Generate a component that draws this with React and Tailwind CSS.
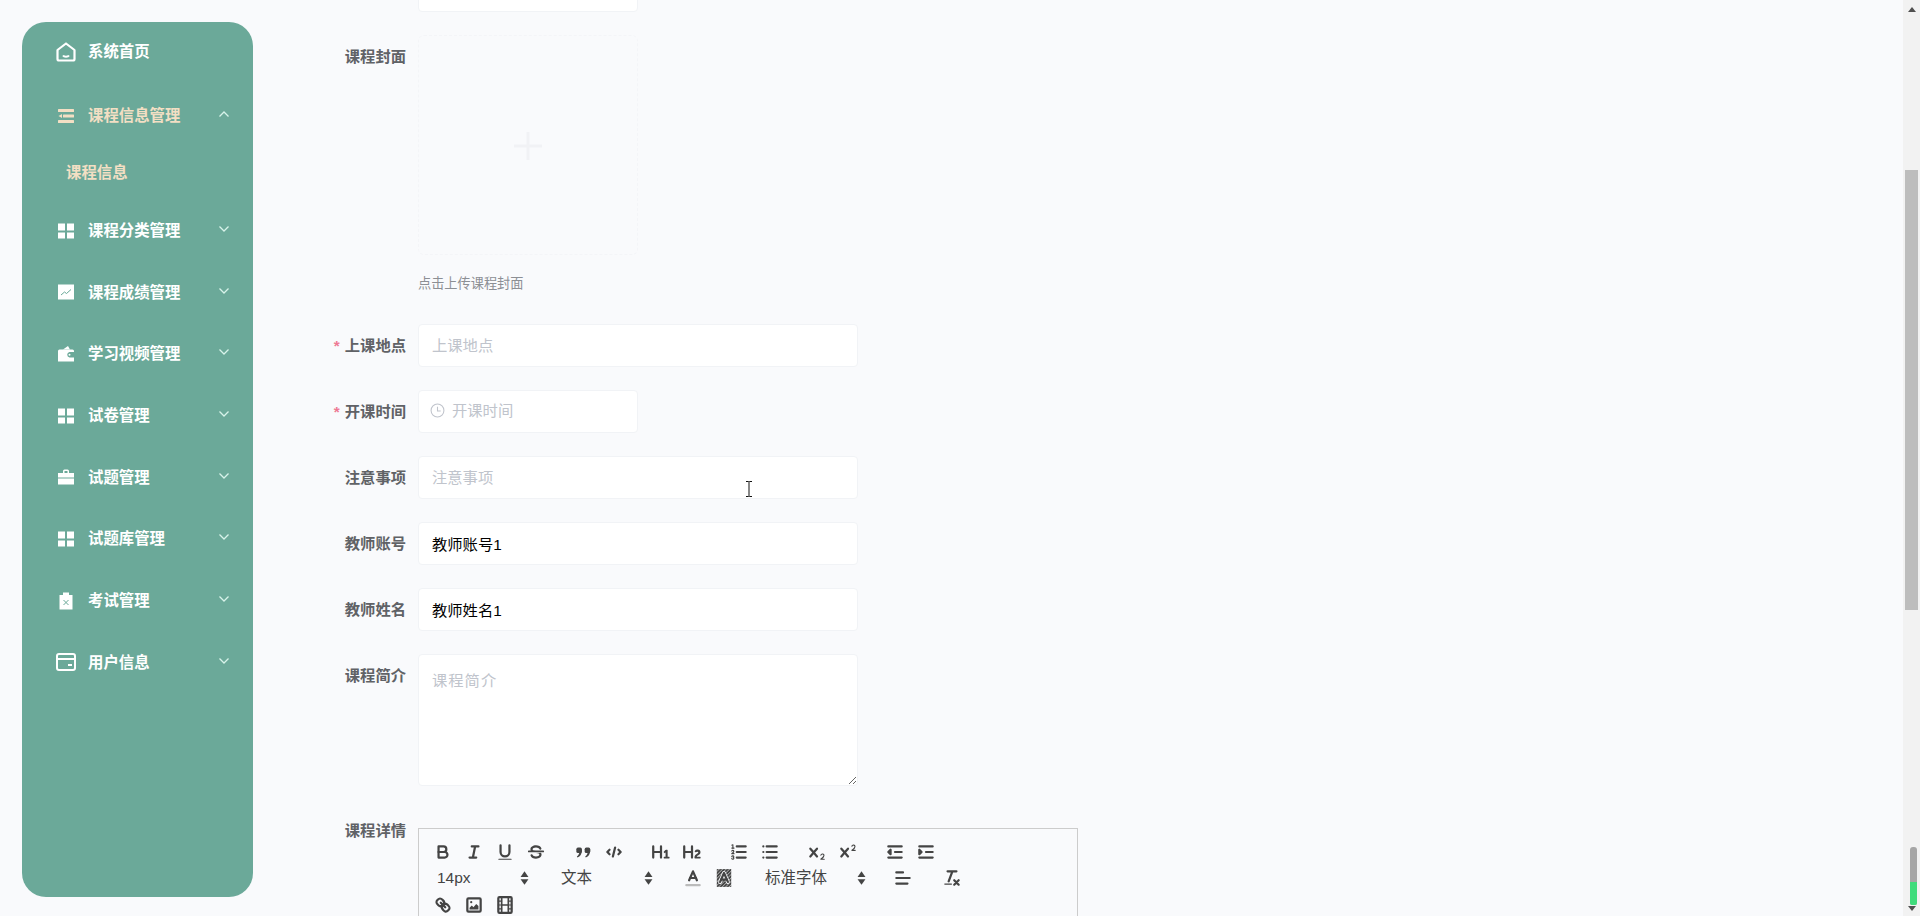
import React from "react";

const S = ({ children }) => (
  <svg viewBox="0 0 18 18" className="w-5 h-5" fill="none" stroke="#444" strokeWidth="2" strokeLinecap="round" strokeLinejoin="round">
    {children}
  </svg>
);
const F = (props) => <path fill="#444" stroke="none" {...props} />;

const xMark =
  "M9.65,5.241a1,1,0,0,0-1.409.108L6,7.964,3.759,5.349A1,1,0,0,0,2.192,6.59178Q2.21541,6.6213,2.241,6.649L4.684,9.5,2.241,12.35A1,1,0,0,0,3.71,13.70722q0.02557-.02768.049-0.05722L6,11.036,8.241,13.65a1,1,0,1,0,1.567-1.24277Q9.78459,12.3777,9.759,12.35L7.316,9.5,9.759,6.651A1,1,0,0,0,9.65,5.241Z";

// toolbar icons
const tools = {
  bold: <S><path d="M5,4H9.5A2.5,2.5,0,0,1,12,6.5v0A2.5,2.5,0,0,1,9.5,9H5V4Z" /><path d="M5,9h5.5A2.5,2.5,0,0,1,13,11.5v0A2.5,2.5,0,0,1,10.5,14H5V9Z" /></S>,
  italic: <S><path d="M7 4H13M5 14H11M8 14L10 4" /></S>,
  underline: <S><path d="M5,3V9a4.012,4.012,0,0,0,4,4H9a4.012,4.012,0,0,0,4-4V3" /><rect x="3" y="15" width="12" height="1" rx="0.5" fill="#444" stroke="none" /></S>,
  strike: <S><path d="M15.5 8.5H2.5" strokeWidth="1.5" /><F d="M9.007,8C6.542,7.791,6,7.519,6,6.5,6,5.792,7.283,5,9,5c1.571,0,2.765.679,2.969,1.309a1,1,0,0,0,1.9-.617C13.356,4.106,11.354,3,9,3,6.2,3,4,4.538,4,6.5a3.2,3.2,0,0,0,.5,1.843Z" /><F d="M8.984,10C11.457,10.208,12,10.479,12,11.5c0,.708-1.283,1.5-3,1.5-1.571,0-2.765-.679-2.969-1.309a1,1,0,1,0-1.9.617C4.644,13.894,6.646,15,9,15c2.8,0,5-1.538,5-3.5a3.2,3.2,0,0,0-.5-1.843Z" /></S>,
  quote: <S><rect x="3" y="5" width="5" height="5" rx="1.5" fill="#444" stroke="none" /><rect x="10.5" y="5" width="5" height="5" rx="1.5" fill="#444" stroke="none" /><F d="M6 7H8C8 11 6.5 13 4 14L3.5 13C5 12 6 10.5 6 7Z" /><F d="M13.5 7H15.5C15.5 11 14 13 11.5 14L11 13C12.5 12 13.5 10.5 13.5 7Z" /></S>,
  code: <S><polyline points="5 7 3 9 5 11" /><polyline points="13 7 15 9 13 11" /><path d="M10 5L8 13" /></S>,
  h1: <S><F d="M10,4V14a1,1,0,0,1-2,0V10H3v4a1,1,0,0,1-2,0V4A1,1,0,0,1,3,4V8H8V4a1,1,0,0,1,2,0Zm6.06787,9.209H14.98975V7.59863a.54085.54085,0,0,0-.605-.60547h-.62744a1.01119,1.01119,0,0,0-.748.29688L11.645,8.56641a.5435.5435,0,0,0-.022.8584l.28613.30762a.53861.53861,0,0,0,.84717.0332l.09912-.08789a1.2137,1.2137,0,0,0,.2417-.35254h.02246s-.01123.30859-.01123.60547V13.209H12.041a.54085.54085,0,0,0-.605.60547v.43945a.54085.54085,0,0,0,.605.60547h4.02686a.54085.54085,0,0,0,.605-.60547v-.43945A.54085.54085,0,0,0,16.06787,13.209Z" /></S>,
  h2: <S><F d="M16.73975,13.81445v.43945a.54085.54085,0,0,1-.605.60547H11.855a.58392.58392,0,0,1-.64893-.60547V14.0127c0-2.90527,3.39941-3.42187,3.39941-4.55469a.77675.77675,0,0,0-.84717-.78125,1.17684,1.17684,0,0,0-.83594.38477c-.2749.26367-.561.374-.85791.13184l-.4292-.34082c-.30811-.24219-.38525-.51758-.1543-.81445a2.97155,2.97155,0,0,1,2.45361-1.17676,2.45393,2.45393,0,0,1,2.68408,2.40918c0,2.45312-3.1792,2.92676-3.27832,3.93848h2.79443A.54085.54085,0,0,1,16.73975,13.81445ZM9,3A.99974.99974,0,0,0,8,4V8H3V4A1,1,0,0,0,1,4V14a1,1,0,0,0,2,0V10H8v4a1,1,0,0,0,2,0V4A.99974.99974,0,0,0,9,3Z" /></S>,
  ol: <S><path d="M7 4H15M7 9H15M7 14H15" /><path d="M2.5 5.5H4.5" strokeWidth="1" /><F d="M3.5,6A0.5,0.5,0,0,1,3,5.5V3.085l-0.276.138A0.5,0.5,0,0,1,2.053,3c-0.124-.247-0.023-0.324.224-0.447l1-.5A0.5,0.5,0,0,1,4,2.5v3A0.5,0.5,0,0,1,3.5,6Z" /><path d="M4.5,10.5h-2c0-.234,1.85-1.076,1.85-2.234A0.959,0.959,0,0,0,2.5,8.156" strokeWidth="1" /><path d="M2.5,14.846a0.959,0.959,0,0,0,1.85-.109A0.7,0.7,0,0,0,3.75,14a0.688,0.688,0,0,0,.6-0.736,0.959,0.959,0,0,0-1.85-.109" strokeWidth="1" /></S>,
  ul: <S><path d="M6 4H15M6 9H15M6 14H15M3 4H3M3 9H3M3 14H3" /></S>,
  sub: <S><F d="M15.5,15H13.861a3.858,3.858,0,0,0,1.914-2.975,1.8,1.8,0,0,0-1.6-1.751A1.921,1.921,0,0,0,12.021,11.7a0.50013,0.50013,0,1,0,.957.291h0a0.914,0.914,0,0,1,1.053-.725,0.81,0.81,0,0,1,.744.762c0,1.076-1.16971,1.86982-1.93971,2.43082A1.45639,1.45639,0,0,0,12,15.5a0.5,0.5,0,0,0,.5.5h3A0.5,0.5,0,0,0,15.5,15Z" /><F d={xMark} /></S>,
  sup: <S><F d="M15.5,7H13.861a4.015,4.015,0,0,0,1.914-2.975,1.8,1.8,0,0,0-1.6-1.751A1.922,1.922,0,0,0,12.021,3.7a0.5,0.5,0,1,0,.957.291,0.917,0.917,0,0,1,1.053-.725,0.81,0.81,0,0,1,.744.762c0,1.077-1.164,1.925-1.934,2.486A1.423,1.423,0,0,0,12,7.5a0.5,0.5,0,0,0,.5.5h3A0.5,0.5,0,0,0,15.5,7Z" /><F d={xMark} /></S>,
  outdent: <S><path d="M3 14H15M3 4H15M9 9H15" /><polygon points="5 7 5 11 3 9 5 7" fill="#444" /></S>,
  indent: <S><path d="M3 14H15M3 4H15M9 9H15" /><polygon points="3 7 3 11 5 9 3 7" fill="#444" /></S>,
  color: <S><path d="M3 15.5H15" stroke="#bbb" /><polyline points="5.5 11 9 3 12.5 11" /><path d="M11.63 9H6.38" /></S>,
  background: (
    <S>
      <defs>
        <pattern id="hatch" width="2.2" height="2.2" patternUnits="userSpaceOnUse" patternTransform="rotate(45)">
          <rect width="0.8" height="2.2" fill="#555" />
        </pattern>
      </defs>
      <rect x="2.5" y="1" width="13" height="16" fill="url(#hatch)" stroke="none" />
      <polyline points="5.5 12.5 9 4.5 12.5 12.5" stroke="#f9fafc" strokeWidth="3.5" />
      <polyline points="5.5 12.5 9 4.5 12.5 12.5" />
      <path d="M11.63 10.5H6.38" />
    </S>
  ),
  align: <S><path d="M3 9H15M3 14H13M3 4H9" /></S>,
  clean: <S><path d="M5 3H13M6 12L9.35 3" /><path d="M11 11L15 15M15 11L11 15" /><rect x="2" y="14" width="7" height="1" rx="0.5" fill="#444" stroke="none" /></S>,
  link: <S><path d="M7 7L11 11" /><path d="M8.9,4.577a3.476,3.476,0,0,1,.36,4.679A3.476,3.476,0,0,1,4.577,8.9C3.185,7.5,2.035,6.4,4.217,4.217S7.5,3.185,8.9,4.577Z" /><path d="M13.423,9.1a3.476,3.476,0,0,0-4.679-.36,3.476,3.476,0,0,0,.36,4.679c1.392,1.392,2.5,2.542,4.679.36S14.815,10.5,13.423,9.1Z" /></S>,
  image: <S><rect x="3" y="3" width="12" height="12" rx="1" /><circle cx="6.5" cy="6.5" r="1" fill="#444" stroke="none" /><polygon points="5 13 5 11.5 7 9.5 8.5 11 11 8 13 10 13 13" fill="#444" stroke="none" /></S>,
  video: <S><rect x="3" y="2" width="12" height="14" rx="1" /><path d="M6 2V16M12 2V16M6 9H12" strokeWidth="1.5" /><path d="M3 5.5H6M3 9H6M3 12.5H6M12 5.5H15M12 9H15M12 12.5H15" strokeWidth="1" /></S>,
};

function Tool({ name, gap }) {
  return (
    <span className={`w-[31px] h-[24px] flex items-center justify-center shrink-0 ${gap ? "mr-4" : ""}`}>
      {tools[name]}
    </span>
  );
}

function Picker({ label, width, gap }) {
  return (
    <span
      className={`flex items-center justify-between pl-[10px] h-[24px] text-[15.5px] text-[#444] shrink-0 ${width} ${gap}`}
    >
      {label}
      <svg viewBox="0 0 8 14" className="w-[9px] h-4" fill="#444">
        <path d="M4 1L7.5 6H0.5Z" />
        <path d="M4 13L0.5 8H7.5Z" />
      </svg>
    </span>
  );
}

// sidebar icons, white and flat
const navIcons = {
  home: (
    <svg viewBox="0 0 20 20" className="w-5 h-5 -mx-[2px] shrink-0" fill="none" stroke="currentColor" strokeWidth="2.2" strokeLinejoin="round">
      <path d="M1.5 8L10 1.5L18.5 8V17A1.5 1.5 0 0 1 17 18.5H3A1.5 1.5 0 0 1 1.5 17Z" />
      <path d="M7 13.5C8 15 12 15 13 13.5" strokeWidth="2" />
    </svg>
  ),
  list: (
    <svg viewBox="0 0 16 16" className="w-4 h-4 shrink-0" fill="currentColor">
      <rect x="0" y="1" width="16" height="3" rx="0.5" />
      <rect x="5" y="6.5" width="11" height="3" rx="0.5" />
      <rect x="0" y="12" width="16" height="3" rx="0.5" />
      <path d="M0.5 8L4 6V10Z" />
    </svg>
  ),
  grid: (
    <svg viewBox="0 0 16 16" className="w-4 h-4 shrink-0" fill="currentColor">
      <rect x="0" y="0.5" width="7" height="7" />
      <rect x="9" y="0.5" width="7" height="7" />
      <rect x="0" y="9.5" width="7" height="6" />
      <rect x="9" y="9.5" width="7" height="6" />
    </svg>
  ),
  chart: (
    <svg viewBox="0 0 16 16" className="w-4 h-4 shrink-0">
      <rect x="0" y="0.5" width="16" height="15" fill="currentColor" />
      <path d="M3 11L6.5 8L8.5 9.5L13 5.5" fill="none" stroke="#6ba999" strokeWidth="1" />
    </svg>
  ),
  wallet: (
    <svg viewBox="0 0 16 16" className="w-4 h-4 shrink-0" fill="currentColor">
      <path d="M5 3.5L10 0L12 3.5Z" />
      <path d="M0 5A1.5 1.5 0 0 1 1.5 3.5H14.5A1.5 1.5 0 0 1 16 5V6H11.5A2.8 2.8 0 0 0 11.5 11.5H16V15.5H0Z" />
      <circle cx="11.5" cy="8.8" r="1" />
    </svg>
  ),
  case: (
    <svg viewBox="0 0 16 16" className="w-4 h-4 shrink-0" fill="currentColor">
      <path d="M5 4V2A1.5 1.5 0 0 1 6.5 0.5H9.5A1.5 1.5 0 0 1 11 2V4H9.5V2H6.5V4Z" />
      <rect x="0" y="4" width="16" height="4.5" />
      <rect x="0" y="9.5" width="16" height="6" />
    </svg>
  ),
  clip: (
    <svg viewBox="0 0 16 18" className="w-4 h-[18px] shrink-0">
      <path d="M1.5 3H5V0.5H11V3H14.5V17.5H1.5Z" fill="currentColor" />
      <path d="M5.5 8L10.5 13M10.5 8L5.5 13" stroke="#6ba999" strokeWidth="1" />
    </svg>
  ),
  card: (
    <svg viewBox="0 0 20 18" className="w-5 h-[18px] -mx-[2px] shrink-0" fill="none" stroke="currentColor" strokeWidth="2">
      <rect x="1" y="1" width="18" height="16" rx="2" />
      <path d="M1 6H19" />
      <path d="M12 12H16" />
    </svg>
  ),
};

const Chevron = ({ up }) => (
  <svg viewBox="0 0 10 6" className="w-[10px] h-[6px] ml-auto mr-6 -mt-[3px] shrink-0" fill="none" stroke="#d8f3ea" strokeWidth="1.3">
    <path d={up ? "M0.5 5.5L5 1L9.5 5.5" : "M0.5 0.5L5 5L9.5 0.5"} />
  </svg>
);

const menu = [
  { icon: "list", label: "课程信息管理", open: true },
  { icon: "grid", label: "课程分类管理" },
  { icon: "chart", label: "课程成绩管理" },
  { icon: "wallet", label: "学习视频管理" },
  { icon: "grid", label: "试卷管理" },
  { icon: "case", label: "试题管理" },
  { icon: "grid", label: "试题库管理" },
  { icon: "clip", label: "考试管理" },
  { icon: "card", label: "用户信息" },
];

const Label = ({ text, required }) => (
  <label className="w-[100px] h-[43px] leading-[43px] pr-3 text-right text-[15.3px] font-bold text-[#606266] shrink-0">
    {required && <span className="text-[#ee7a94] mr-[5px]">*</span>}
    {text}
  </label>
);

const inputClass =
  "h-[43px] w-[440px] bg-white border border-[#f1f3f6] rounded-[4px] px-[13px] text-[15.3px] text-black outline-none placeholder:text-[#c0c4cc]";

export default function App() {
  return (
    <div
      className="h-screen w-full flex overflow-hidden bg-[#f9fafc] relative"
      style={{ fontFamily: '"Liberation Sans", "Noto Sans CJK SC", sans-serif' }}
    >
      {/* Sidebar */}
      <aside className="w-[231px] h-[875px] mt-[22px] ml-[22px] bg-[#6ba999] rounded-[24px] shrink-0 text-white text-[15.4px] font-bold">
        <div className="h-[60px] mb-[3px] flex items-center pl-9 gap-[14px]">
          {navIcons.home}
          <span>系统首页</span>
        </div>
        {menu.map((m) => (
          <div key={m.label}>
            <div className={`h-[61.7px] flex items-center pl-9 gap-[14px] ${m.open ? "text-[#f3dfc4]" : ""}`}>
              {navIcons[m.icon]}
              <span>{m.label}</span>
              <Chevron up={m.open} />
            </div>
            {m.open && (
              <div className="h-[54px] -mt-[1px] flex items-center pl-11 text-[#f3dfc4]">课程信息</div>
            )}
          </div>
        ))}
      </aside>

      {/* Form */}
      <main className="flex-1 min-w-0 pl-[65px]">
        <div className="flex flex-col gap-[23px] -mt-[31px]">
          <div className="flex">
            <div className="w-[100px]" />
            <div className="h-[43px] w-[220px] bg-white border border-[#f1f3f6] rounded-[4px]" />
          </div>

          <div className="flex">
            <Label text="课程封面" />
            <div>
              <div className="w-[220px] h-[220px] border border-dashed border-[#f4f5f8] rounded-[6px] flex items-center justify-center">
                <svg viewBox="0 0 28 28" className="w-7 h-7 mt-[2px]" fill="none" stroke="#f1f2f5" strokeWidth="3">
                  <path d="M14 0V28M0 14H28" />
                </svg>
              </div>
              <p className="mt-[19px] mb-[7px] leading-5 text-[13.2px] text-[#8c8f94]">点击上传课程封面</p>
            </div>
          </div>

          <div className="flex">
            <Label text="上课地点" required />
            <input className={inputClass} placeholder="上课地点" readOnly />
          </div>

          <div className="flex">
            <Label text="开课时间" required />
            <div className="h-[43px] w-[220px] bg-white border border-[#f1f3f6] rounded-[4px] flex items-center pl-[11px] gap-[7px] text-[15.3px] text-[#c0c4cc]">
              <svg viewBox="0 0 14 14" className="w-[15px] h-[15px] -mt-[2px]" fill="none" stroke="#c0c4cc" strokeWidth="1">
                <circle cx="7" cy="7" r="6" />
                <path d="M7 3.5V7.5H10" />
              </svg>
              开课时间
            </div>
          </div>

          <div className="flex">
            <Label text="注意事项" />
            <input className={inputClass} placeholder="注意事项" readOnly />
          </div>

          <div className="flex">
            <Label text="教师账号" />
            <input className={`${inputClass} pb-[2px]`} defaultValue="教师账号1" readOnly />
          </div>

          <div className="flex">
            <Label text="教师姓名" />
            <input className={`${inputClass} pb-[2px]`} defaultValue="教师姓名1" readOnly />
          </div>

          <div className="flex">
            <Label text="课程简介" />
            <textarea
              className="h-[132px] w-[440px] bg-white border border-[#f1f3f6] rounded-[4px] px-[13px] pt-[15px] pb-[13px] text-[15.3px] tracking-[1px] outline-none placeholder:text-[#c0c4cc] block"
              placeholder="课程简介"
              readOnly
            />
          </div>

          <div className="flex">
            <Label text="课程详情" />
            <div className="w-[660px] mt-[19px] border border-[#ccc] pl-[8px] pt-[9px] pb-[8px]">
              <div className="flex h-[27px] items-center">
                <Tool name="bold" />
                <Tool name="italic" />
                <Tool name="underline" />
                <Tool name="strike" gap />
                <Tool name="quote" />
                <Tool name="code" gap />
                <Tool name="h1" />
                <Tool name="h2" gap />
                <Tool name="ol" />
                <Tool name="ul" gap />
                <Tool name="sub" />
                <Tool name="sup" gap />
                <Tool name="outdent" />
                <Tool name="indent" />
              </div>
              <div className="flex h-[26px] items-center">
                <Picker label="14px" width="w-[102px]" gap="mr-[22px]" />
                <Picker label="文本" width="w-[102px]" gap="mr-[24px]" />
                <Tool name="color" />
                <Tool name="background" />
                <Picker label="标准字体" width="w-[111px]" gap="ml-[16px] mr-[21px]" />
                <Tool name="align" />
                <span className="w-[18px] shrink-0" />
                <Tool name="clean" />
              </div>
              <div className="flex h-[27px] items-center">
                <Tool name="link" />
                <Tool name="image" />
                <Tool name="video" />
              </div>
            </div>
          </div>
        </div>
      </main>

      {/* Browser scrollbar */}
      <div className="w-[17px] h-full bg-[#f2f2f2] shrink-0 flex flex-col items-center relative">
        <svg viewBox="0 0 8 5" className="w-2 h-[5px] mt-[7px]" fill="#505050">
          <path d="M4 0L8 5H0Z" />
        </svg>
        <div className="w-[13px] h-[440px] mt-[158px] bg-[#bdbdbd]" />
        <svg viewBox="0 0 8 5" className="w-2 h-[5px] mt-auto mb-[5px]" fill="#505050">
          <path d="M4 5L0 0H8Z" />
        </svg>
        {/* overlay widget */}
        <div className="absolute left-[7px] top-[847px] w-[7px] h-[58px] rounded-t-[3px] rounded-b-[2px] overflow-hidden bg-[#a6a6a6] flex flex-col justify-end">
          <div className="h-[23px] bg-[#3fdc7c]" />
        </div>
      </div>

      {/* mouse cursor */}
      <svg viewBox="0 0 8 16" className="absolute left-[745px] top-[481px] w-2 h-4" fill="none" stroke="#111" strokeWidth="1">
        <path d="M1 0.5H3.5L4 1L4.5 0.5H7M4 1V15M1 15.5H3.5L4 15L4.5 15.5H7" />
      </svg>
    </div>
  );
}
